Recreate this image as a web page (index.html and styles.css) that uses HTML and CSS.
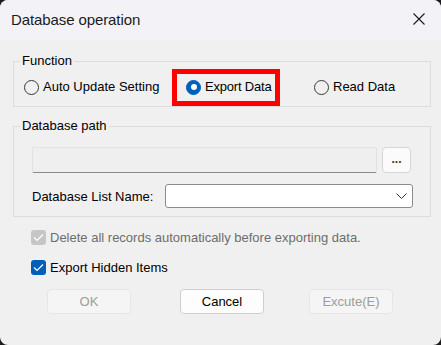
FILE: index.html
```html
<!DOCTYPE html>
<html>
<head>
<meta charset="utf-8">
<link rel="stylesheet" href="styles.css">
</head>
<body>
<div class="window">
  <div class="titlebar">
    <span class="title">Database operation</span>
    <svg class="close" width="12" height="12" viewBox="0 0 12 12"><path d="M0.5 0.5 L11.5 11.5 M11.5 0.5 L0.5 11.5" stroke="#1a1a1a" stroke-width="1.1" fill="none"/></svg>
  </div>
  <div class="content">
    <fieldset class="group">
      <legend>Function</legend>
      <div class="radios">
        <label class="radio"><span class="dot"></span><span>Auto Update Setting</span></label>
        <label class="radio highlighted"><span class="dot checked"></span><span>Export Data</span></label>
        <label class="radio"><span class="dot"></span><span>Read Data</span></label>
      </div>
    </fieldset>
    <fieldset class="group group-path">
      <legend>Database path</legend>
      <div class="path-body">
        <div class="path-row">
          <div class="path-field"></div>
          <div class="browse">...</div>
        </div>
        <div class="list-row">
          <span class="list-label">Database List Name:</span>
          <div class="combo">
            <svg class="chev" width="11" height="6" viewBox="0 0 11 6"><path d="M0.5 0.5 L5.5 5.5 L10.5 0.5" stroke="#333" stroke-width="1" fill="none"/></svg>
          </div>
        </div>
      </div>
    </fieldset>
    <div class="options">
      <div class="check disabled"><span class="box"><svg width="11" height="9" viewBox="0 0 11 9"><path d="M1 4.5 L4 7.5 L10 1.5" stroke="#fff" stroke-width="1.2" fill="none"/></svg></span><span>Delete all records automatically before exporting data.</span></div>
      <div class="check"><span class="box"><svg width="11" height="9" viewBox="0 0 11 9"><path d="M1 4.5 L4 7.5 L10 1.5" stroke="#fff" stroke-width="1.2" fill="none"/></svg></span><span>Export Hidden Items</span></div>
    </div>
    <div class="buttons">
      <div class="btn btn-disabled">OK</div>
      <div class="btn btn-cancel">Cancel</div>
      <div class="btn btn-disabled btn-exec">Excute(E)</div>
    </div>
  </div>
</div>
</body>
</html>
```
FILE: styles.css
```css
html, body {
  margin: 0;
  padding: 0;
  background: #1c1c1c;
}
body {
  font-family: "Liberation Sans", Arial, sans-serif;
  font-size: 13px;
  color: #000;
}
.window {
  width: 441px;
  height: 345px;
  border-radius: 8px;
  overflow: hidden;
  background: #f0f0f0;
}
.titlebar {
  height: 40px;
  background: #f3f3f7;
  display: flex;
  align-items: center;
  justify-content: space-between;
  padding: 0 16px 0 11px;
  box-sizing: border-box;
}
.title {
  font-size: 15px;
  color: #1b1b1b;
  margin-top: -1px;
  letter-spacing: -0.1px;
}
.close {
  display: block;
  margin-top: -2px;
}
.content {
  padding: 13px 10px 0 13px;
}
.group {
  margin: 0;
  border: 1px solid #dcdcdc;
  padding: 0;
}
.group legend {
  margin-left: 6px;
  padding: 0 2px;
  line-height: 16px;
  font-size: 13px;
}
.radios {
  display: grid;
  grid-template-columns: 162px 128px auto;
  height: 16px;
  padding: 10px 0 11px 10px;
}
.radio {
  display: flex;
  align-items: center;
  gap: 4px;
  position: relative;
  line-height: 16px;
}
.dot {
  width: 15px;
  height: 15px;
  box-sizing: border-box;
  border: 1px solid #3a3a3a;
  border-radius: 50%;
  position: relative;
  flex: none;
}
.dot.checked {
  background: #005fb8;
  border-color: #005fb8;
}
.dot.checked::after {
  content: "";
  position: absolute;
  left: 3.5px;
  top: 3.5px;
  width: 6px;
  height: 6px;
  border-radius: 50%;
  background: #fff;
}
.highlighted::after {
  content: "";
  position: absolute;
  left: -14px;
  top: -10px;
  width: 108px;
  height: 37px;
  box-sizing: border-box;
  border: 5px solid #f00;
}
.highlighted span:last-child {
  letter-spacing: -0.2px;
}
.group-path {
  margin-top: 11px;
}
.path-body {
  padding: 13px 0 8px 18px;
}
.path-row {
  display: flex;
  gap: 5px;
}
.path-field {
  width: 345px;
  height: 26px;
  box-sizing: border-box;
  border: 1px solid #e2e2e2;
  border-bottom: 1px solid #8a8a8a;
  border-radius: 2px;
  background: #efefef;
}
.browse {
  width: 29px;
  height: 26px;
  box-sizing: border-box;
  border: 1px solid #d6d6d6;
  border-radius: 4px;
  background: #fbfbfb;
  text-align: center;
  line-height: 22px;
  color: #4a3020;
  font-weight: bold;
  font-size: 12px;
}
.list-row {
  display: flex;
  align-items: center;
  margin-top: 11px;
}
.list-label {
  width: 133px;
}
.combo {
  width: 248px;
  height: 24px;
  box-sizing: border-box;
  border: 1px solid #8c8c8c;
  border-radius: 3px;
  background: #fff;
  display: flex;
  align-items: center;
  justify-content: flex-end;
  padding-right: 5px;
}
.chev {
  display: block;
}
.options {
  margin-top: 13px;
  padding-left: 18px;
  display: flex;
  flex-direction: column;
  gap: 15px;
}
.check {
  display: flex;
  align-items: center;
  gap: 4px;
  height: 15px;
}
.box {
  width: 15px;
  height: 15px;
  border-radius: 3px;
  background: #005fb8;
  display: flex;
  align-items: center;
  justify-content: center;
  flex: none;
}
.check.disabled .box {
  background: #c6c6c6;
}
.check.disabled {
  color: #6d6d6d;
}
.buttons {
  display: flex;
  margin-top: 14px;
  padding-left: 34px;
}
.btn {
  width: 84px;
  height: 25px;
  box-sizing: border-box;
  border-radius: 4px;
  text-align: center;
  line-height: 23px;
}
.btn-disabled {
  background: #f5f5f5;
  border: 1px solid #e6e6e6;
  color: #9c9c9c;
}
.btn-cancel {
  margin-left: 49px;
  background: #fdfdfd;
  border: 1px solid #cfcfcf;
  color: #000;
}
.btn-exec {
  margin-left: 45px;
}
```
